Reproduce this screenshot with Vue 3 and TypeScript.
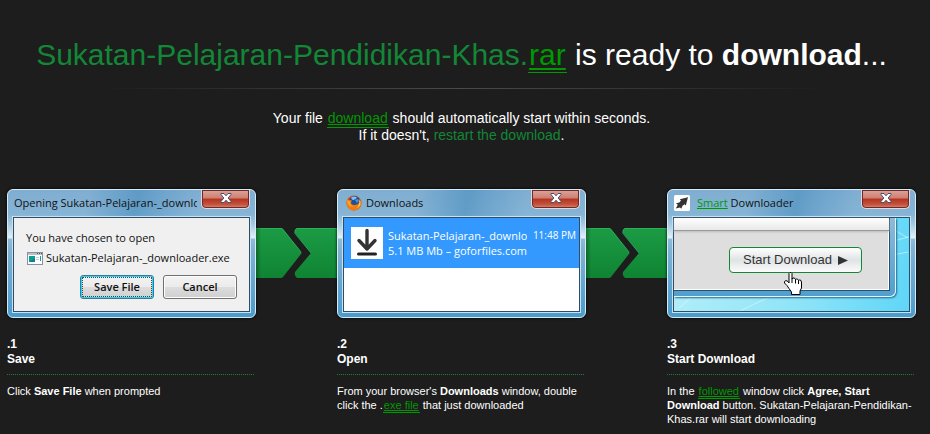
<script setup lang="ts">
type Kind = 'save' | 'open' | 'start'

interface Step {
  id: number
  kind: Kind
  heading: string
}

const steps: Step[] = [
  { id: 1, kind: 'save', heading: 'Save' },
  { id: 2, kind: 'open', heading: 'Open' },
  { id: 3, kind: 'start', heading: 'Start Download' },
]

const fileName = 'Sukatan-Pelajaran-Pendidikan-Khas'
const shortName = 'Sukatan-Pelajaran-_downloader.exe'

// Each connector is an arrow head followed by the notched tail of the next one.
const tips: number[] = [46, 44]

function headPath(tip: number): string {
  return `M0 0H${tip - 21}q1 0 2 1L${tip - 1} 24q1 1 0 2L${tip - 19} 49q-1 1-2 1H0z`
}

function headEdge(tip: number): string {
  return `M0 .5H${tip - 21}q1 0 2 1L${tip - 1} 24`
}

function tailPath(tip: number): string {
  return `M81 0H${tip - 5}q-3 1-2 5L${tip + 9} 25L${tip - 7} 44q-1 4 2 6H81z`
}

function tailEdge(tip: number): string {
  return `M81 .5H${tip - 5}q-3 1-2 5L${tip + 9} 25`
}
</script>

<template>
  <main class="page">
    <header class="intro">
      <h1>
        <span class="name">{{ fileName }}.</span><a class="ad" href="#">rar</a> is ready to <b>download</b>...
      </h1>
      <div class="rule"></div>
      <p>
        Your file <a class="ad" href="#">download</a> should automatically start within seconds.<br />
        If it doesn't, <a class="restart" href="#">restart the download</a>.
      </p>
    </header>

    <section class="windows">
      <template v-for="(step, i) in steps" :key="step.id">
        <div class="window">
          <div class="titlebar" :class="step.kind">
            <svg v-if="step.kind === 'open'" class="title-icon" viewBox="0 0 16 16" aria-hidden="true">
              <circle cx="8" cy="8" r="7.5" fill="#d9480c" />
              <circle cx="8.6" cy="6.6" r="5.6" fill="#1f4f9e" />
              <path d="M5 2.5q3-2 6 0q-1 2-3 2.300q-2 1-3-2.300z" fill="#7cc4ee" />
              <path d="M9 5l3-1 1 2-2 2z" fill="#4b93d6" />
              <path d="M1 3q0 2 2 2l3 .5-1.500 2Q6 10.500 9 10q3-.5 4-2l.5-4Q16 7 15 10q-2 5.500-7 5.500Q2 15 .8 10 .3 6 1 3z" fill="#ef7d13" />
              <path d="M13.500 4.500q1.500 2.500.8 5.500-1.300 3-4.300 3.500 3.500-2 3.500-9z" fill="#ffc928" />
              <path d="M1.500 5l2 1.500 2 .2-1.700 1.500Q5 11 8 12 3 12 1.500 8z" fill="#f9a825" />
            </svg>
            <svg v-if="step.kind === 'start'" class="title-icon" viewBox="0 0 16 16" aria-hidden="true">
              <rect width="16" height="16" rx="1.500" fill="#fff" />
              <path d="M14 2.200L5.800 4.300 7 5.600 5.300 7.600 2 8.200 3.800 9.800 1.800 13.600 6 12.400 7.300 13.800 8.500 10.800 10.600 9.200 11.800 10.400z" fill="#333" />
            </svg>
            <span v-if="step.kind === 'save'" class="title">Opening {{ shortName }}</span>
            <span v-else-if="step.kind === 'open'" class="title">Downloads</span>
            <span v-else class="title"><a class="smart" href="#">Smart</a> Downloader</span>
            <button class="close" type="button" aria-label="Close">
              <svg viewBox="0 0 12 10" aria-hidden="true">
                <path d="M1 .5h3L6 2.800 8 .5h3v1L8.200 5 11 8.500v1H8L6 7.200 4 9.500H1v-1L3.800 5 1 1.500z" fill="#fff" stroke="#4a4f68" />
              </svg>
            </button>
          </div>

          <div class="body">
            <div v-if="step.kind === 'save'" class="dialog">
              <p>You have chosen to open</p>
              <div class="file">
                <svg viewBox="0 0 16 13" aria-hidden="true">
                  <rect x=".5" y=".5" width="15" height="12" fill="#fff" stroke="#8a919b" />
                  <path d="M1 1h14v2H1z" fill="#b9c0c9" />
                  <path d="M10 1h1v1h-1zM12 1h1v1h-1zM14 1h1v1h-1z" fill="#4d5560" />
                  <rect x="2" y="4" width="6" height="6" fill="#0d9e8e" />
                  <path d="M2 10l6-4v4z" fill="#0a7ea5" />
                  <path d="M9 5h3v1H9zM9 7h3v1H9z" fill="#c3cbd3" />
                  <rect x="13" y="4" width="1" height="5" fill="#1a9bb5" />
                </svg>
                <span>{{ shortName }}</span>
              </div>
              <div class="actions">
                <button class="primary" type="button">Save File</button>
                <button type="button">Cancel</button>
              </div>
            </div>

            <div v-else-if="step.kind === 'open'" class="list">
              <div class="row">
                <svg viewBox="0 0 32 32" aria-hidden="true">
                  <rect width="32" height="32" fill="#fff" />
                  <path d="M16 3.500V22M8 13.500l8 8.500 8-8.500" fill="none" stroke="#333" stroke-width="3.400" stroke-linecap="round" stroke-linejoin="round" />
                  <path d="M7.500 27h17" stroke="#222" stroke-width="3" stroke-linecap="round" />
                </svg>
                <div class="meta">
                  <div class="line">
                    <span class="clip">{{ shortName }}</span>
                    <time>11:48 PM</time>
                  </div>
                  <div>5.1 MB Mb – goforfiles.com</div>
                </div>
              </div>
            </div>

            <div v-else class="desktop">
              <svg class="streaks" viewBox="0 0 235 93" preserveAspectRatio="none" aria-hidden="true">
                <path d="M66 93Q92 80 108 74M5 90l16-14M216 24l22-6M214 38l20-4M214 8l20 12" fill="none" stroke="#d8fbff" stroke-opacity=".6" />
              </svg>
              <div class="inner">
                <div class="inner-body">
                  <div class="strip"></div>
                  <button class="start-btn" type="button">
                    Start Download
                    <svg viewBox="0 0 10 9" aria-hidden="true"><path d="M0 0l10 4.500L0 9z" fill="#333" /></svg>
                  </button>
                </div>
              </div>
              <svg class="hand" viewBox="0 0 20 25" aria-hidden="true">
                <path
                  d="M7 1.500h1l1 1V8l1-1h1.500l1 1.500 1-.5h1l1 1.500 1-.5h1L18.500 11v6L17 20v3.500H8.500V21L6 17.500 4 14.500 1.500 12v-1.500L3 9.500l2 1 1 1.500V2.500z"
                  fill="#fff"
                  stroke="#000"
                />
                <path d="M9 7.500V12M12.500 8.500V12.500M15.500 9.500V13" stroke="#000" />
              </svg>
            </div>
          </div>
        </div>

        <svg v-if="i < tips.length" class="connector" viewBox="0 0 81 50" aria-hidden="true">
          <defs>
            <linearGradient :id="`green-${i}`" x1="0" y1="0" x2="0" y2="1">
              <stop offset="0" stop-color="#1c9b45" />
              <stop offset="1" stop-color="#0f8432" />
            </linearGradient>
            <linearGradient :id="`shade-${i}`" x1="0" x2="1">
              <stop offset="0" stop-opacity=".3" />
              <stop offset="1" stop-opacity="0" />
            </linearGradient>
          </defs>
          <path :d="headPath(tips[i])" :fill="`url(#green-${i})`" />
          <path :d="headEdge(tips[i])" fill="none" stroke="#2bb660" stroke-opacity=".8" />
          <path :d="tailPath(tips[i])" :fill="`url(#green-${i})`" />
          <path :d="tailEdge(tips[i])" fill="none" stroke="#2bb660" stroke-opacity=".8" />
          <rect width="5" height="50" :fill="`url(#shade-${i})`" />
        </svg>
      </template>
    </section>

    <section class="captions">
      <article v-for="step in steps" :key="step.id">
        <h2>.{{ step.id }}<br />{{ step.heading }}</h2>
        <p v-if="step.kind === 'save'">Click <b>Save File</b> when prompted</p>
        <p v-else-if="step.kind === 'open'">
          From your browser's <b>Downloads</b> window, double click the .<a class="ad" href="#">exe file</a> that just downloaded
        </p>
        <p v-else>
          In the <a class="ad" href="#">followed</a> window click <b>Agree, Start Download</b> button. {{ fileName }}.rar will start downloading
        </p>
      </article>
    </section>
  </main>
</template>

<style>
body {
  background: #1d1d1d;
}
</style>

<style scoped>
.page {
  padding: 37px 14px 8px 7px;
  font-family: 'Liberation Sans', Arial, sans-serif;
  color: #fff;
}

h1,
h2,
p {
  margin: 0;
}

.intro {
  text-align: center;
}

h1 {
  font-size: 30px;
  line-height: 36px;
  font-weight: 400;
  white-space: nowrap;
}

.name,
.restart {
  color: #128736;
}

.restart {
  text-decoration: none;
}

.ad {
  color: #090;
  text-decoration: underline;
  text-underline-offset: 1px;
  border-bottom: 1px solid #090;
  padding: 0 1px 1px;
}

h1 .ad {
  text-decoration-thickness: 2px;
  text-underline-offset: 3px;
}

.rule {
  height: 1px;
  margin: 15px 10% 0;
  background: linear-gradient(90deg, transparent, #4a4a4a 50%, transparent);
}

.intro p {
  padding-top: 21px;
  font-size: 14px;
  line-height: 17px;
}

.windows {
  display: flex;
  align-items: flex-start;
  padding-top: 45px;
}

.window {
  flex: 1;
  min-width: 0;
  box-sizing: border-box;
  border: 1px solid #d5ebf7;
  border-radius: 6px;
  padding: 0 4px 5px;
  background:
    linear-gradient(100deg, transparent 32%, rgba(60, 135, 185, 0.5) 52%, rgba(70, 140, 190, 0.35) 60%, transparent 76%) top / 100% 26px no-repeat,
    linear-gradient(#80aed2 0, #86b4d5 24px, #a4c9e2 34px, #e4f1f9 48px, #8fbbd9 49px, #7fb1d4 60px, #4a9ccd 100%);
  box-shadow: 0 0 3px #000;
  font-family: 'Open Sans', 'Trebuchet MS', sans-serif;
  font-size: 11px;
  color: #111;
}

.titlebar {
  display: flex;
  align-items: flex-start;
  height: 26px;
  padding-left: 2px;
}

.titlebar.open {
  padding-left: 4px;
}

.title-icon {
  flex: none;
  width: 16px;
  height: 16px;
  margin-top: 5px;
}

.title {
  flex: 1;
  min-width: 0;
  margin: 5px 4px 0 0;
  line-height: 16px;
  overflow: hidden;
  white-space: nowrap;
}

.open .title {
  margin-left: 4px;
}

.start .title {
  margin-left: 7px;
}

.smart {
  color: #090;
}

.close {
  flex: none;
  display: flex;
  align-items: center;
  justify-content: center;
  width: 49px;
  height: 19px;
  margin-right: 1px;
  padding: 0 0 2px;
  border: 1px solid #e3d7dc;
  border-top: 0;
  border-radius: 0 0 5px 5px;
  box-shadow: inset 0 0 0 1px #6b2a2c;
  background: linear-gradient(#dda599, #cd7f72 45%, #b53320 50%, #c4533c 80%, #dc8a70);
}

.close svg {
  width: 12px;
  height: 10px;
}

.body {
  border: 1px solid #2d4d68;
  outline: 1px solid #c9e2f1;
  margin: 1px 1px 0;
}

.dialog,
.list,
.desktop {
  height: 93px;
  box-sizing: border-box;
}

.dialog {
  padding: 12px 12px 0;
  background: #f0f0f0;
}

.dialog p {
  line-height: 16px;
}

.file {
  display: flex;
  align-items: center;
  gap: 3px;
  padding: 4px 0 0 1px;
  line-height: 16px;
  white-space: nowrap;
}

.file svg {
  flex: none;
  width: 16px;
  height: 13px;
}

.actions {
  display: flex;
  justify-content: flex-end;
  gap: 9px;
  padding-top: 9px;
}

.actions button {
  width: 74px;
  height: 24px;
  padding: 0;
  border: 1px solid #707070;
  border-radius: 3px;
  box-shadow: inset 0 0 0 1px #fcfcfc;
  background: linear-gradient(#f3f3f3, #ebebeb 49%, #dddddd 50%, #cfcfcf);
  font: 600 11px/16px 'Open Sans', 'Trebuchet MS', sans-serif;
  color: #111;
}

.actions .primary {
  border-color: #2c7d9e;
  box-shadow: inset 0 0 0 1px #2fd2f6;
  outline: 1px dotted #444;
  outline-offset: -3px;
}

.list {
  background: #fff;
}

.row {
  display: flex;
  gap: 5px;
  box-sizing: border-box;
  height: 50px;
  padding: 9px 3px 0 7px;
  background: #39f;
  color: #fff;
}

.row > svg {
  flex: none;
  width: 32px;
  height: 32px;
}

.meta {
  flex: 1;
  min-width: 0;
  padding-top: 1px;
  line-height: 15px;
  white-space: nowrap;
}

.line {
  display: flex;
  gap: 6px;
}

.clip {
  flex: 1;
  min-width: 0;
  overflow: hidden;
}

.line time {
  font-size: 10px;
}

.desktop {
  position: relative;
  background: linear-gradient(100deg, #b5eef9, #8fe4f8 55%, #5fd6f8);
}

.streaks {
  position: absolute;
  inset: 0;
  width: 100%;
  height: 100%;
}

.inner {
  position: relative;
  box-sizing: border-box;
  height: 79px;
  margin-right: 13px;
  padding: 0 5px 5px 0;
  border: 1px solid #e3f3fb;
  border-width: 0 1px 1px 0;
  border-bottom-right-radius: 6px;
  background: linear-gradient(#8dbbd9, #4f9fcf);
  box-shadow: 1px 1px 2px #28678a;
}

.inner-body {
  box-sizing: border-box;
  height: 73px;
  border: 1px solid #2d4d68;
  border-width: 0 1px 1px 0;
  background: #dedede;
  box-shadow: inset -1px -1px #fff;
}

.strip {
  height: 12px;
  border-bottom: 1px solid #999;
  background: linear-gradient(#fff, #e8e8e8);
  box-shadow: 0 1px 2px #bbb;
}

.start-btn {
  display: flex;
  align-items: center;
  justify-content: center;
  gap: 6px;
  width: 133px;
  height: 26px;
  margin: 16px 27px 0 auto;
  padding: 0;
  border: 1px solid #128736;
  border-radius: 4px;
  background: linear-gradient(#fff, #dfe3e5 50%, #fbfbfb);
  font: 13px/16px 'Liberation Sans', Arial, sans-serif;
  color: #333;
  white-space: nowrap;
}

.start-btn svg {
  width: 10px;
  height: 9px;
}

.hand {
  position: absolute;
  right: 106px;
  top: 53px;
  width: 20px;
  height: 25px;
}

.connector {
  flex: none;
  width: 81px;
  height: 50px;
  margin-top: 39px;
}

.captions {
  display: grid;
  grid-template-columns: repeat(3, 1fr);
  gap: 81px;
  padding-top: 19px;
}

article {
  padding-right: 2px;
}

h2 {
  padding-bottom: 7px;
  margin-bottom: 9px;
  border-bottom: 1px dotted #1f7a3d;
  font-size: 12px;
  line-height: 15px;
}

.captions p {
  font-size: 11px;
  line-height: 14px;
}
</style>
